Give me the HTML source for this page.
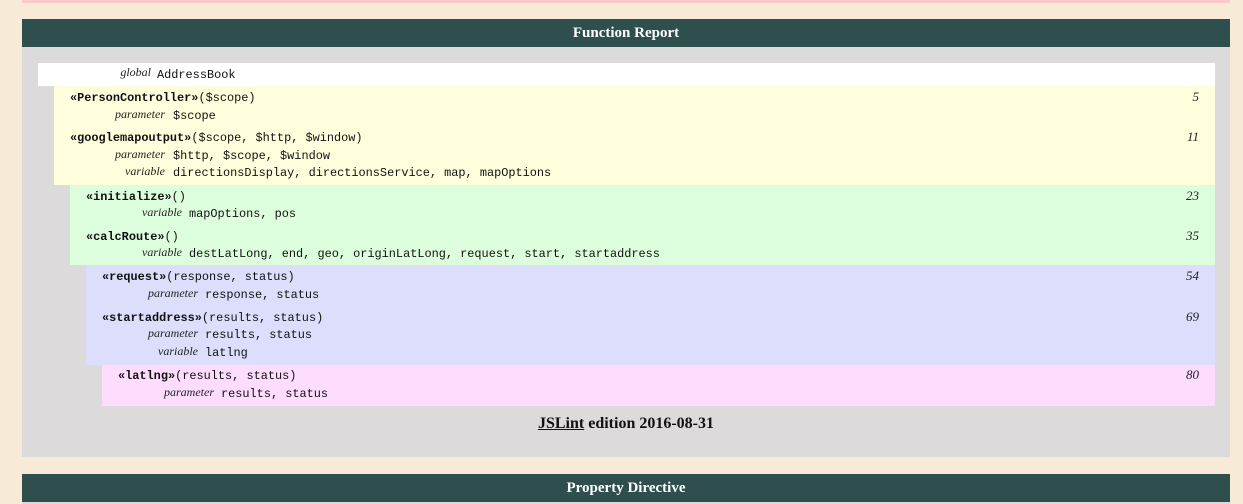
<!DOCTYPE html>
<html><head><meta charset="utf-8"><style>
body{margin:0;width:1243px;height:504px;background:#f7ebd7;position:relative;overflow:hidden;font-family:"Liberation Mono",monospace;}
.a{position:absolute}
.h{background:#2f4f4f;color:#fff;font-weight:bold;font-size:15px;font-family:"Liberation Serif",serif;text-align:center;line-height:29px}
.l{position:absolute;height:18px;line-height:18px;font-size:11.9px;color:#111;white-space:pre;margin-top:1px}
.l b{font-weight:bold}
.k{position:absolute;height:18px;font-style:italic;font-size:12px;font-family:"Liberation Serif",serif;line-height:18px;color:#222;text-align:right;margin-top:-1px}
.n{position:absolute;left:1100px;width:99px;text-align:right;font-style:italic;font-size:13px;font-family:"Liberation Serif",serif;line-height:18px;color:#222}
</style></head><body>
<div class="a" style="left:22px;top:0;width:1208px;height:3px;background:#fbc9c9"></div>
<div class="a h" style="left:22px;top:19px;width:1208px;height:28px">Function Report</div>
<div class="a" style="left:22px;top:47px;width:1208px;height:410px;background:#dcdadb"></div>
<div class="a" style="left:38px;top:63px;width:1177px;height:23px;background:#fff"></div>
<div class="a" style="left:54px;top:86px;width:1161px;height:99px;background:#fefedd"></div>
<div class="a" style="left:70px;top:185px;width:1145px;height:80px;background:#ddfedd"></div>
<div class="a" style="left:86px;top:265px;width:1129px;height:100px;background:#ddddfc"></div>
<div class="a" style="left:102px;top:365px;width:1113px;height:41px;background:#fddcfe"></div>

<div class="k" style="left:60px;width:91px;top:64px">global</div><div class="l" style="left:157px;top:65px">AddressBook</div>

<div class="l" style="left:70px;top:88px"><b>«PersonController»</b>($scope)</div><div class="n" style="top:88px">5</div>
<div class="k" style="left:60px;width:105px;top:106px">parameter</div><div class="l" style="left:173px;top:106px">$scope</div>
<div class="l" style="left:70px;top:128px"><b>«googlemapoutput»</b>($scope, $http, $window)</div><div class="n" style="top:128px">11</div>
<div class="k" style="left:60px;width:105px;top:146px">parameter</div><div class="l" style="left:173px;top:146px">$http, $scope, $window</div>
<div class="k" style="left:60px;width:105px;top:163px">variable</div><div class="l" style="left:173px;top:163px">directionsDisplay, directionsService, map, mapOptions</div>

<div class="l" style="left:86px;top:187px"><b>«initialize»</b>()</div><div class="n" style="top:187px">23</div>
<div class="k" style="left:80px;width:102px;top:204px">variable</div><div class="l" style="left:189px;top:204px">mapOptions, pos</div>
<div class="l" style="left:86px;top:227px"><b>«calcRoute»</b>()</div><div class="n" style="top:227px">35</div>
<div class="k" style="left:80px;width:102px;top:244px">variable</div><div class="l" style="left:189px;top:244px">destLatLong, end, geo, originLatLong, request, start, startaddress</div>

<div class="l" style="left:102px;top:267px"><b>«request»</b>(response, status)</div><div class="n" style="top:267px">54</div>
<div class="k" style="left:96px;width:102px;top:285px">parameter</div><div class="l" style="left:205px;top:285px">response, status</div>
<div class="l" style="left:102px;top:308px"><b>«startaddress»</b>(results, status)</div><div class="n" style="top:308px">69</div>
<div class="k" style="left:96px;width:102px;top:325px">parameter</div><div class="l" style="left:205px;top:325px">results, status</div>
<div class="k" style="left:96px;width:102px;top:343px">variable</div><div class="l" style="left:205px;top:343px">latlng</div>

<div class="l" style="left:118px;top:366px"><b>«latlng»</b>(results, status)</div><div class="n" style="top:366px">80</div>
<div class="k" style="left:112px;width:102px;top:384px">parameter</div><div class="l" style="left:221px;top:384px">results, status</div>

<div class="a" style="left:22px;top:414px;width:1208px;text-align:center;font-weight:bold;font-size:16px;font-family:'Liberation Serif',serif;color:#111;line-height:20px"><span style="text-decoration:underline">JSLint</span> edition 2016-08-31</div>
<div class="a h" style="left:22px;top:474px;width:1208px;height:28px">Property Directive</div>
<div class="a" style="left:22px;top:502px;width:1208px;height:2px;background:#dcdadb"></div>
</body></html>
